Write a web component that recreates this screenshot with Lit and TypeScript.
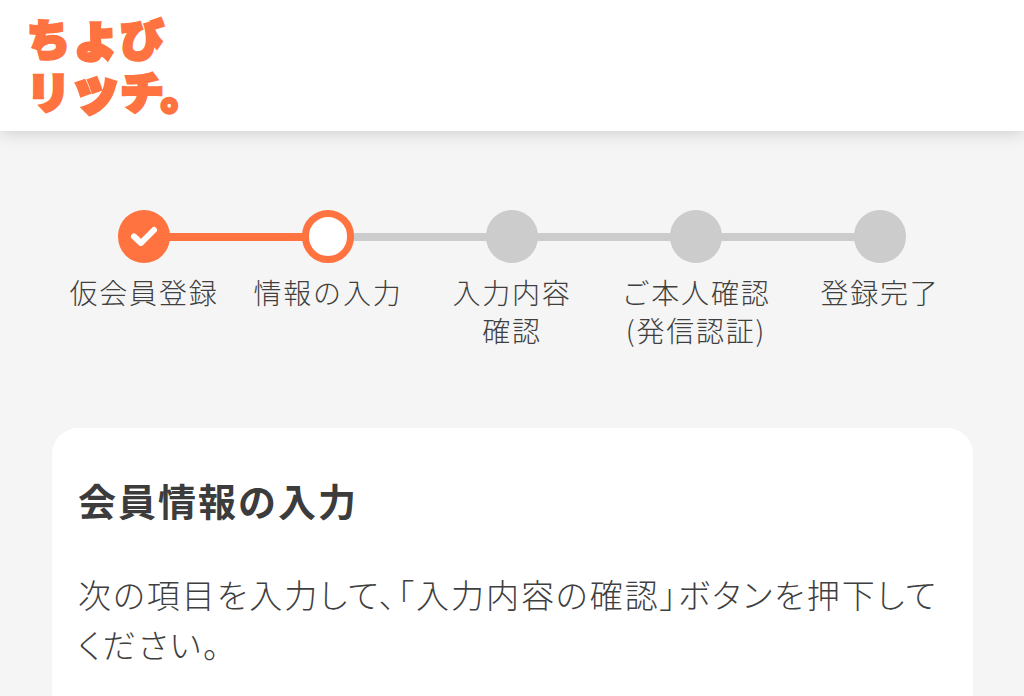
import { LitElement, html, css } from "lit";
import { customElement } from "lit/decorators.js";

@customElement("app-root")
export class AppRoot extends LitElement {
  static styles = css`
    :host { display: block; width: 1024px; height: 696px; overflow: hidden; background: #f5f5f5; font-family: "Noto Sans CJK JP", "Noto Sans", sans-serif; color: #3f3f3f; }
    .header { height: 131px; background: #fff; box-shadow: 0 2px 16px rgba(0,0,0,.16); padding: 11px 0 0 27px; box-sizing: border-box; position: relative; }
    .logo { color: #ff7340; font-weight: 900; font-size: 43px; line-height: 53px; letter-spacing: -0.5px; -webkit-text-stroke: 3.5px #ff7340; white-space: nowrap; }
    .big { font-size: 1.2em; line-height: 0; }
    .steps { display: grid; grid-template-columns: repeat(5, 184px); padding: 79px 0 0 52px; }
    .step { display: flex; flex-direction: column; align-items: center; position: relative; }
    .dot { width: 52.5px; height: 52.5px; border-radius: 50%; background: #ccc; position: relative; z-index: 1; display: flex; align-items: center; justify-content: center; box-sizing: border-box; }
    .dot.done { background: #ff7340; }
    .dot.cur { background: #fff; border: 7px solid #ff7340; }
    .line { position: absolute; top: 23px; height: 8px; left: 92px; width: 184px; background: #ccc; }
    .line.on { background: #ff7340; }
    .label { margin-top: 10.5px; font-size: 28px; font-weight: 300; line-height: 38px; text-align: center; letter-spacing: 1.8px; white-space: nowrap; }
    .card { margin: 79px 0 0 52px; width: 921px; height: 400px; box-sizing: border-box; background: #fff; border-radius: 26px; padding: 47px 26px; }
    h1 { margin: 0; font-size: 38px; line-height: 50px; font-weight: 700; letter-spacing: 2px; color: #3c3c3c; }
    p { margin: 44px 0 0; font-size: 33px; font-weight: 300; line-height: 50px; font-feature-settings: "palt"; letter-spacing: 2px; }
  `;
  render() {
    const steps: [string, string][] = [
      ["仮会員登録", "done"], ["情報の入力", "cur"], ["入力内容\n確認", ""], ["ご本人確認\n(発信認証)", ""], ["登録完了", ""],
    ];
    return html`
      <div class="header"><div class="logo">ち<span class="big">ょ</span>び<br />リ<span class="big">ッ</span>チ。</div></div>
      <div class="steps">
        ${steps.map(([t, s], i) => html`<div class="step">
          ${i < 4 ? html`<div class="line ${i === 0 ? "on" : ""}"></div>` : ""}
          <div class="dot ${s}">${s === "done" ? html`<svg width="30" height="30" viewBox="0 0 30 30"><path d="M5 15.5l7 6.5L25 9" fill="none" stroke="#fff" stroke-width="6" stroke-linecap="round" stroke-linejoin="round"/></svg>` : ""}</div>
          <div class="label">${t.split("\n").map((l) => html`<div>${l}</div>`)}</div>
        </div>`)}
      </div>
      <div class="card">
        <h1>会員情報の入力</h1>
        <p>次の項目を入力して、「入力内容の確認」ボタンを押下してください。</p>
      </div>`;
  }
}
